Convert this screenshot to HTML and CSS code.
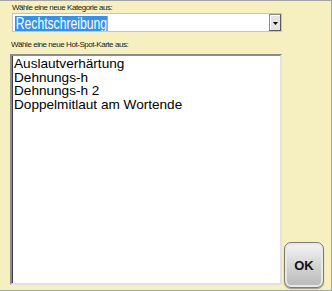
FILE: index.html
```html
<!DOCTYPE html>
<html lang="de">
<head>
	<meta charset="UTF-8">
	<title>Hot-Spot-Karte</title>
	<link rel="stylesheet" href="styles.css">
</head>
<body>
	<div class="dialog">
		<div class="main">
			<div class="label">Wähle eine neue Kategorie aus:</div>
			<div class="combo">
				<div class="combo-text"><span class="sel">Rechtschreibung</span></div>
				<div class="combo-btn">
					<svg width="5" height="3" viewBox="0 0 5 3"><path d="M0 0h5L2.5 3z" fill="#000"/></svg>
				</div>
			</div>
			<div class="label label2">Wähle eine neue Hot-Spot-Karte aus:</div>
			<ul class="list">
				<li>Auslautverhärtung</li>
				<li>Dehnungs-h</li>
				<li>Dehnungs-h 2</li>
				<li>Doppelmitlaut am Wortende</li>
			</ul>
		</div>
		<div class="side">
			<button class="ok">OK</button>
		</div>
	</div>
</body>
</html>
```
FILE: styles.css
```css
*{margin:0;padding:0;box-sizing:border-box;}
body {
	font-family: "Liberation Sans", Arial, sans-serif;
	background: #f6efc0;
}
.dialog {
	width: 332px;
	height: 291px;
	background: #f6efc0;
	border: 1px solid #a4a4a4;
	border-left: none;
	display: flex;
}
.main {
	width: 282px;
	padding: 2px 0 0 10px;
	display: flex;
	flex-direction: column;
}
.label {
	font-size: 8px;
	line-height: 10px;
	height: 10px;
	letter-spacing: -0.45px;
	color: #1a1a1a;
	margin-left: 2px;
	white-space: nowrap;
}
.label2 {
	margin: 8px 0 4px 1px;
}
.combo {
	margin-left: 2px;
	height: 19px;
	background: #fff;
	border: 1px solid #c4c4c4;
	display: flex;
}
.combo-text {
	flex: 1;
	padding: 1px 0 0 2px;
	overflow: hidden;
}
.sel {
	display: inline-block;
	height: 15px;
	line-height: 15px;
	font-size: 16px;
	padding: 0 1px;
	color: #fff;
	background: #3591ea;
	transform: scaleX(.76);
	transform-origin: left;
	white-space: nowrap;
}
.combo-btn {
	width: 12px;
	background: #e4e4e4;
	border: 1px solid #8a8a8a;
	border-right-color: #5a5a5a;
	border-bottom-color: #5a5a5a;
	box-shadow: inset 1px 1px 0 #fff;
	display: flex;
	align-items: center;
	justify-content: center;
}
.combo-btn svg {
	display: block;
	margin-top: 1px;
}
.list {
	list-style: none;
	height: 231px;
	background: #fff;
	border: 2px solid;
	border-color: #8c8c8c #e2e2e2 #e2e2e2 #8c8c8c;
	box-shadow: inset 1px 0 0 #3c3c48;
	padding: 1px 0 0 2px;
	font-size: 13.6px;
	line-height: 13.5px;
	color: #000;
}
.side {
	flex: 1;
	display: flex;
	align-items: flex-end;
	padding: 0 0 2px 2px;
}
.ok {
	width: 40px;
	height: 46px;
	border: 1px solid #7a7a7a;
	border-radius: 7px;
	background: linear-gradient(#f4f4f4, #d2d2d2 55%, #b8b8b8);
	box-shadow: inset 0 0 0 2px #e8e8e8, 0 1px 1px rgba(0,0,0,.35);
	font-family: "Liberation Sans", Arial, sans-serif;
	font-weight: bold;
	font-size: 13px;
	color: #111;
}
```
